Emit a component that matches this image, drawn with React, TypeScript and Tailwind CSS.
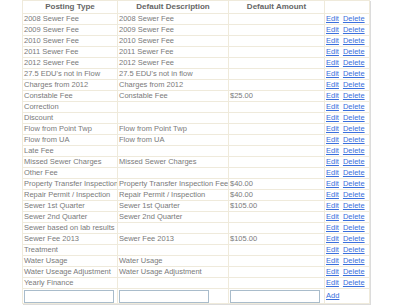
const rows: [string, string, string][] = [
  ['2008 Sewer Fee', '2008 Sewer Fee', ''],
  ['2009 Sewer Fee', '2009 Sewer Fee', ''],
  ['2010 Sewer Fee', '2010 Sewer Fee', ''],
  ['2011 Sewer Fee', '2011 Sewer Fee', ''],
  ['2012 Sewer Fee', '2012 Sewer Fee', ''],
  ["27.5 EDU's not in Flow", "27.5 EDU's not in flow", ''],
  ['Charges from 2012', 'Charges from 2012', ''],
  ['Constable Fee', 'Constable Fee', '$25.00'],
  ['Correction', '', ''],
  ['Discount', '', ''],
  ['Flow from Point Twp', 'Flow from Point Twp', ''],
  ['Flow from UA', 'Flow from UA', ''],
  ['Late Fee', '', ''],
  ['Missed Sewer Charges', 'Missed Sewer Charges', ''],
  ['Other Fee', '', ''],
  ['Property Transfer Inspection', 'Property Transfer Inspection Fee', '$40.00'],
  ['Repair Permit / Inspection', 'Repair Permit / Inspection', '$40.00'],
  ['Sewer 1st Quarter', 'Sewer 1st Quarter', '$105.00'],
  ['Sewer 2nd Quarter', 'Sewer 2nd Quarter', ''],
  ['Sewer based on lab results', '', ''],
  ['Sewer Fee 2013', 'Sewer Fee 2013', '$105.00'],
  ['Treatment', '', ''],
  ['Water Usage', 'Water Usage', ''],
  ['Water Useage Adjustment', 'Water Usage Adjustment', ''],
  ['Yearly Finance', '', ''],
];

const cell = 'border border-[#efeadb] px-[1px] h-[11px] leading-[10px] whitespace-nowrap overflow-hidden';

export default function App() {
  return (
    <div className="w-[394px] h-[307px] bg-white pl-[22px] font-['Liberation_Sans',Arial,sans-serif] text-[7.5px] text-[#7a7a7a]">
      <div className="w-[348px] shadow-[1px_1px_0_#dcdcdc]">
        <table className="border-collapse table-fixed w-[347px]">
          <colgroup>
            <col className="w-[95px]" />
            <col className="w-[111px]" />
            <col className="w-[96px]" />
            <col className="w-[45px]" />
          </colgroup>
          <thead>
            <tr>
              <th className="border border-[#efeadb] h-[13px] font-bold text-[#666] text-[8px] text-center">Posting Type</th>
              <th className="border border-[#efeadb] h-[13px] font-bold text-[#666] text-[8px] text-center">Default Description</th>
              <th className="border border-[#efeadb] h-[13px] font-bold text-[#666] text-[8px] text-center">Default Amount</th>
              <th className="border border-[#efeadb] h-[13px]"></th>
            </tr>
          </thead>
          <tbody>
            {rows.map((r) => (
              <tr key={r[0]}>
                <td className={cell}>{r[0]}</td>
                <td className={cell}>{r[1]}</td>
                <td className={cell}>{r[2]}</td>
                <td className={cell}>
                  <a href="#" className="text-[#3a6fdc] underline">Edit</a>
                  <a href="#" className="ml-[4px] text-[#3a6fdc] underline">Delete</a>
                </td>
              </tr>
            ))}
            <tr>
              <td className="border border-[#efeadb] h-[15px] px-[1px]">
                <input className="block w-[90px] h-[13px] border border-[#a9bccb] bg-white" />
              </td>
              <td className="border border-[#efeadb] h-[15px] px-[1px]">
                <input className="block w-[90px] h-[13px] border border-[#a9bccb] bg-white" />
              </td>
              <td className="border border-[#efeadb] h-[15px] px-[1px]">
                <input className="block w-[90px] h-[13px] border border-[#a9bccb] bg-white" />
              </td>
              <td className="border border-[#efeadb] h-[15px] px-[1px]">
                <a href="#" className="text-[#3a6fdc] underline">Add</a>
              </td>
            </tr>
          </tbody>
        </table>
      </div>
    </div>
  );
}
